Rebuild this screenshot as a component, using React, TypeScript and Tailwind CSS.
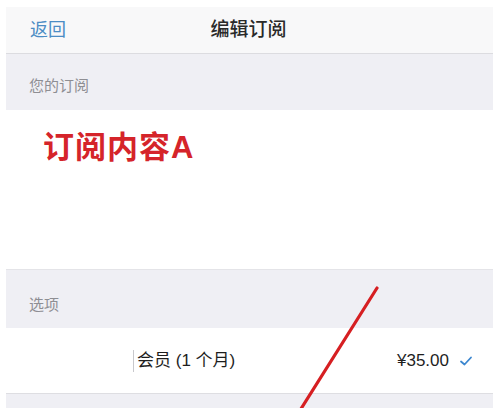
const App = () => {
  return (
    <div
      className="relative w-[500px] h-[408px] overflow-hidden bg-white pt-[7px] pl-[6px] pr-[7px]"
      style={{ fontFamily: '"Liberation Sans", "Noto Sans CJK SC", sans-serif' }}
    >
      <div className="flex flex-col h-full bg-[#efeff4]">
        {/* nav bar */}
        <div className="relative flex items-center h-[47px] shrink-0 bg-[#f8f8f9] border-b border-[#dcdce0]">
          <span className="pl-[24px] text-[18px] text-[#4b8cc4]">返回</span>
          <span className="absolute left-0 right-0 text-center text-[19px] font-medium text-[#2a2a2a] pr-[2px]">
            编辑订阅
          </span>
        </div>

        {/* your subscription header */}
        <div className="flex items-end h-[56px] shrink-0 pl-[23px] pb-[13px] text-[15px] text-[#8e8e93]">
          您的订阅
        </div>

        {/* subscription content */}
        <div className="h-[159px] shrink-0 bg-white pl-[37px] pt-[22px]">
          <span className="text-[31px] font-bold leading-none text-[#d5242a] tracking-[1px]">订阅内容A</span>
        </div>

        {/* options header */}
        <div className="flex items-center h-[59px] shrink-0 pl-[23px] pt-[12px] text-[15px] text-[#8e8e93] border-t border-[#e4e4e8]">
          选项
        </div>

        {/* option row */}
        <div className="flex items-center h-[65px] shrink-0 bg-white pr-[20px]">
          <span className="ml-[127px] w-px h-[22px] bg-[#c8c8cc]" />
          <span className="ml-[3px] text-[17px] text-[#1e1e1e]">会员 (1 个月)</span>
          <span className="ml-auto text-[17px] text-[#1e1e1e]">¥35.00</span>
          <svg className="ml-[10px]" width="14" height="12" viewBox="0 0 14 12">
            <path d="M2 6.5 L5.5 9.5 L12 2.5" fill="none" stroke="#3b86cf" strokeWidth="1.8" strokeLinecap="round" strokeLinejoin="round" />
          </svg>
        </div>

        <div className="flex-1 border-t border-[#dedee2]" />
      </div>

      {/* red annotation stroke */}
      <svg className="absolute left-0 top-0 pointer-events-none" width="500" height="408" viewBox="0 0 500 408">
        <line x1="377" y1="288" x2="299" y2="412" stroke="#d61f22" strokeWidth="3.2" strokeLinecap="round" />
      </svg>
    </div>
  );
};

export default App;
